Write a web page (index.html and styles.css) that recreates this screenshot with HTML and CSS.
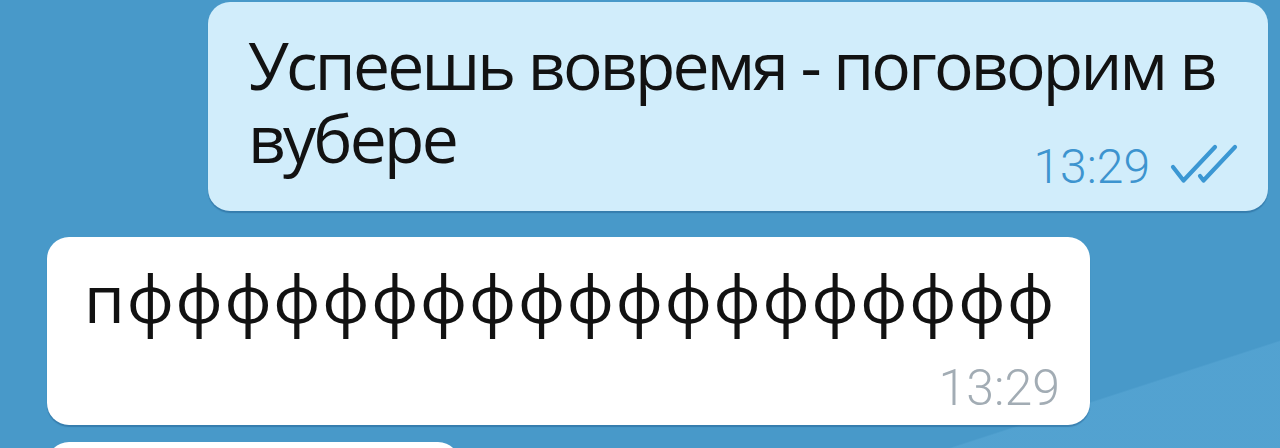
FILE: index.html
```html
<!DOCTYPE html>
<html lang="ru">
<head>
<meta charset="utf-8">
<title>Chat</title>
<link rel="stylesheet" href="styles.css">
</head>
<body>
<div class="chat">
  <div class="bubble out">
    <div class="text">Успеешь вовремя - поговорим в вубере</div>
    <div class="meta">
      <span class="time">13:29</span>
      <svg class="checks" width="68" height="40" viewBox="0 0 68 40" aria-hidden="true">
        <path d="M3 23 L13.5 36.5 L45 3" fill="none" stroke="#3b97d3" stroke-width="4.2" stroke-linecap="round" stroke-linejoin="round"/>
        <path d="M30 32 L33.5 36.5 L65 3" fill="none" stroke="#3b97d3" stroke-width="4.2" stroke-linecap="round" stroke-linejoin="round"/>
      </svg>
    </div>
  </div>
  <div class="bubble in">
    <div class="text">пффффффффффффффффффф</div>
    <div class="meta"><span class="time">13:29</span></div>
  </div>
  <div class="bubble in next"></div>
</div>
</body>
</html>
```

FILE: styles.css
```css
html, body {
  margin: 0;
  padding: 0;
}
body {
  width: 1280px;
  height: 448px;
  overflow: hidden;
  background-color: #4899c9;
  background-image: linear-gradient(162deg, rgba(255,255,255,0) 0%, rgba(255,255,255,0) 87.5%, rgba(110,185,228,0.28) 87.7%, rgba(110,185,228,0.28) 100%);
  font-family: "Open Sans", "Noto Sans", sans-serif;
  color: #121212;
}
.chat {
  display: flex;
  flex-direction: column;
  padding-top: 2px;
  height: 446px;
  overflow: hidden;
}
.bubble {
  flex: none;
  border-radius: 22px;
  box-shadow: 0 2px 1px rgba(30, 90, 140, 0.45);
}
.out {
  margin-left: 208px;
  width: 1060px;
  height: 209px;
  box-sizing: border-box;
  background: #d1edfb;
  padding: 26px 30px 0 40px;
}
.text {
  font-size: 66px;
  font-weight: 500;
  line-height: 73px;
}
.out .text {
  letter-spacing: -2.8px;
}
.in .text {
  letter-spacing: 1.7px;
}
.meta {
  display: flex;
  justify-content: flex-end;
  align-items: flex-end;
  height: 49px;
}
.time {
  font-family: Roboto, "Open Sans", sans-serif;
  font-weight: 300;
  font-size: 48px;
  line-height: 49px;
}
.out .meta {
  margin-top: -32px;
  gap: 20px;
}
.out .time {
  color: #3d94cf;
}
.checks {
  display: block;
  margin-bottom: 7px;
}
.in {
  background: #ffffff;
  margin-left: 47px;
}
.bubble.in:not(.next) {
  margin-top: 26px;
  width: 1043px;
  height: 188px;
  box-sizing: border-box;
  padding: 24px 30px 0 37px;
}
.in .meta {
  margin-top: 30px;
}
.in .time {
  font-size: 50px;
  color: #a2acb4;
}
.next {
  margin-top: 17px;
  width: 413px;
  height: 60px;
}
```
